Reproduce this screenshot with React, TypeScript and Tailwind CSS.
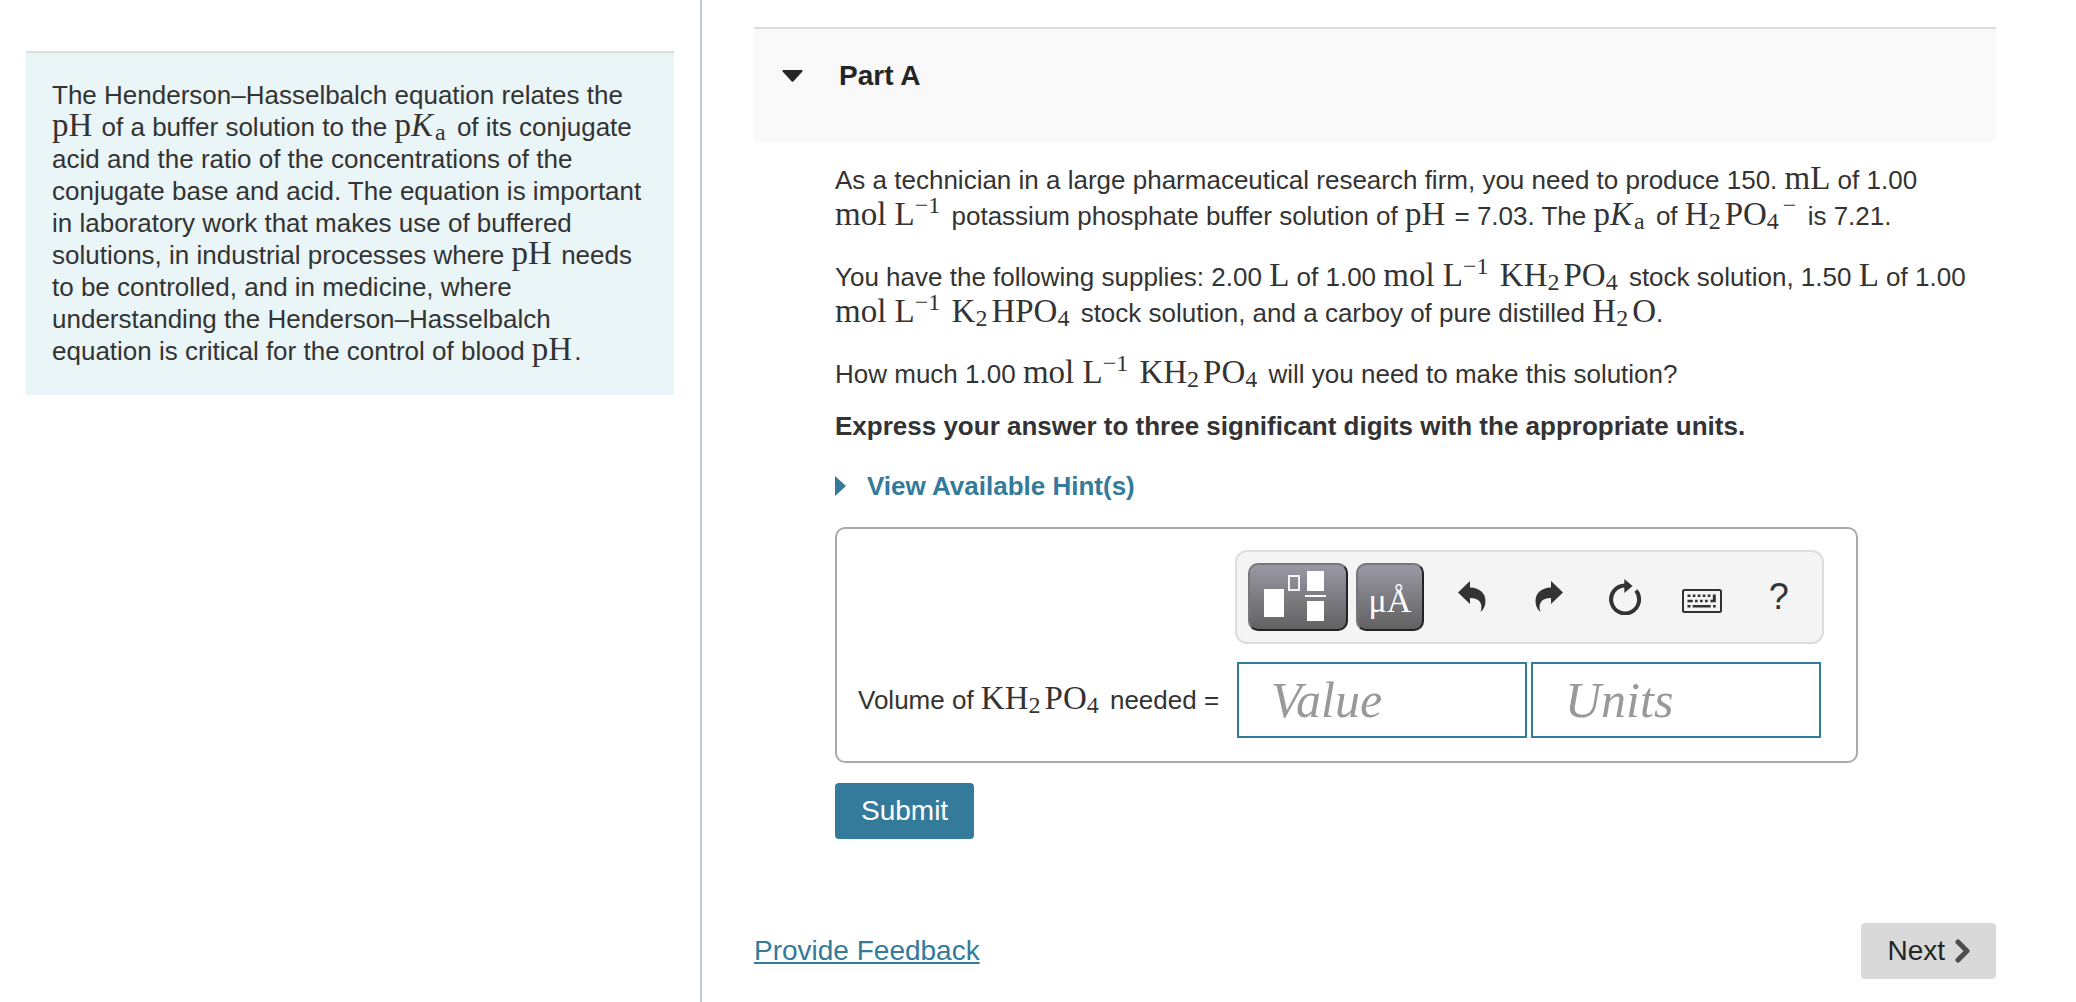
import React from 'react';

interface MathProps {
  children: React.ReactNode;
}

// Inline formula text, set in an upright serif
const Formula: React.FC<MathProps> = ({ children }) => (
  <span className="font-['Liberation_Serif',serif] text-[33px] leading-0 whitespace-nowrap">
    {children}
  </span>
);

const Sub: React.FC<MathProps> = ({ children }) => (
  <sub className="text-[24px] mr-1 -bottom-1">{children}</sub>
);

const Sup: React.FC<MathProps> = ({ children }) => (
  <sup className="text-[24px] mr-1 -top-3">{children}</sup>
);

const PH = () => (
  <Formula>
    <span className="mr-0.5">pH</span>
  </Formula>
);
const PKa = () => (
  <Formula>
    p<i className="mr-0.5">K</i>
    <Sub>a</Sub>
  </Formula>
);
const MolPerL = () => (
  <Formula>
    mol L<Sup>−1</Sup>
  </Formula>
);
const KH2PO4 = () => (
  <Formula>
    KH<Sub>2</Sub>PO<Sub>4</Sub>
  </Formula>
);

const UndoShape = () => (
  <path d="M0 11.5 L12 0 V6.5 C22 6.8 27.5 12.5 27.5 20 C27.5 25 25.5 28.5 22.5 31 C25 24 23 17 12 17 V23 Z" />
);

const TemplateIcon = () => (
  <svg width="96" height="64" viewBox="2 2 96 64" fill="#fff" aria-hidden="true">
    <rect x="16" y="26" width="20" height="28" />
    <rect x="41" y="13" width="10" height="14" fill="none" stroke="#fff" strokeWidth="1.8" />
    <rect x="59" y="8" width="17" height="20" />
    <rect x="57" y="32" width="21" height="2" />
    <rect x="59" y="38" width="17" height="20" />
  </svg>
);

const UndoIcon = () => (
  <svg width="28" height="32" viewBox="0 0 28 32" fill="#333" aria-hidden="true">
    <UndoShape />
  </svg>
);

const RedoIcon = () => (
  <svg width="28" height="32" viewBox="0 0 28 32" fill="#333" aria-hidden="true">
    <g transform="matrix(-1 0 0 1 28 0)">
      <UndoShape />
    </g>
  </svg>
);

const ResetIcon = () => (
  <svg width="32" height="36" viewBox="0 0 32 36" aria-hidden="true">
    <path d="M27 11.6 A14 14 0 1 1 16 6.4" fill="none" stroke="#333" strokeWidth="4" />
    <path d="M15.3 0 L23.5 7 L15.3 14 Z" fill="#333" />
  </svg>
);

const KeyboardIcon = () => (
  <svg width="40" height="24" viewBox="0 0 40 24" fill="#333" aria-hidden="true">
    <rect x="1" y="1" width="38" height="22" rx="1.5" fill="none" stroke="#333" strokeWidth="2" />
    <path d="M5.5 5.5h3v2.5h-3z M10.7 5.5h2.7v2.5h-2.7z M15.7 5.5h2.7v2.5h-2.7z M20.7 5.5h2.7v2.5h-2.7z M25.7 5.5h2.7v2.5h-2.7z" />
    <path d="M5.5 10.7h5.3v2.6h-5.3z M13 10.7h2.7v2.6h-2.7z M18 10.7h2.7v2.6h-2.7z M23 10.7h2.7v2.6h-2.7z M28.4 10.7h2.4V5.5h3v7.8h-5.4z" />
    <path d="M5.5 16h3v2.5h-3z M10.7 16h18v2.5h-18z M31 16h2.8v2.5h-2.8z" />
  </svg>
);

interface ToolButtonProps {
  label: string;
  children: React.ReactNode;
}

const DarkButton: React.FC<ToolButtonProps> = ({ label, children }) => (
  <button
    type="button"
    aria-label={label}
    className="flex h-[68px] min-w-[68px] items-center justify-center rounded-[10px] border-2 border-t-[#777] border-l-[#777] border-r-[#222] border-b-[#222] bg-linear-to-b from-[#9a98a4] to-[#626262] text-white"
  >
    {children}
  </button>
);

const PlainButton: React.FC<ToolButtonProps> = ({ label, children }) => (
  <button type="button" aria-label={label} className="flex h-[68px] flex-1 items-center justify-center text-[#333]">
    {children}
  </button>
);

const Toolbar = () => (
  <div className="flex h-[94px] w-[589px] items-center rounded-xl border-2 border-[#ddd] bg-[#f4f4f4] pl-[11px] pr-[5px]">
    <div className="mr-2.5 flex gap-2">
      <DarkButton label="Templates">
        <TemplateIcon />
      </DarkButton>
      <DarkButton label="Symbols">
        <span className="pt-2 font-['Liberation_Serif',serif] text-[34px] leading-none">μÅ</span>
      </DarkButton>
    </div>
    <PlainButton label="Undo">
      <UndoIcon />
    </PlainButton>
    <PlainButton label="Redo">
      <RedoIcon />
    </PlainButton>
    <PlainButton label="Reset">
      <ResetIcon />
    </PlainButton>
    <PlainButton label="Keyboard shortcuts">
      <div className="pt-2">
        <KeyboardIcon />
      </div>
    </PlainButton>
    <PlainButton label="Help">
      <span className="text-[36px] leading-none">?</span>
    </PlainButton>
  </div>
);

const inputStyle =
  "h-[76px] w-[290px] border-2 border-[#337a9b] bg-white px-8 font-['Liberation_Serif',serif] text-[50px] text-[#333] placeholder:italic placeholder:text-[#999] placeholder:opacity-100 outline-none";

const AnswerBox = () => (
  <div className="mt-[23px] grid w-[1023px] max-w-full grid-cols-[1fr_auto] items-center gap-y-[18px] rounded-[10px] border-2 border-[#aaa] pt-[21px] pr-8 pb-[23px] pl-[21px]">
    <div className="col-start-2">
      <Toolbar />
    </div>
    <label htmlFor="value" className="whitespace-nowrap">
      Volume of <KH2PO4 /> needed =
    </label>
    <div className="flex gap-1 pl-0.5">
      <input id="value" type="text" placeholder="Value" className={inputStyle} />
      <input type="text" aria-label="Units" placeholder="Units" className={inputStyle} />
    </div>
  </div>
);

const Intro = () => (
  <aside className="border-r-2 border-[#bccadb] px-[26px] pt-[51px]">
    <p className="border-t-2 border-[#ddd] bg-[#eaf5f7] px-[26px] pt-[26px] pb-[28px] text-[26px] leading-[32px]">
      The Henderson–Hasselbalch equation relates the <PH /> of a buffer solution to the <PKa /> of its
      conjugate acid and the ratio of the concentrations of the conjugate base and acid. The equation is
      important in laboratory work that makes use of buffered solutions, in industrial processes where{' '}
      <PH /> needs to be controlled, and in medicine, where understanding the Henderson–Hasselbalch equation
      is critical for the control of blood <PH />.
    </p>
  </aside>
);

const Question = () => (
  <div className="pt-5 pl-[81px] text-[26px] leading-[36px]">
    {/* Problem text */}
    <div className="flex flex-col gap-[25px]">
      <p>
        As a technician in a large pharmaceutical research firm, you need to produce 150.{' '}
        <Formula>mL</Formula> of 1.00 <MolPerL /> potassium phosphate buffer solution of <PH /> = 7.03. The{' '}
        <PKa /> of{' '}
        <Formula>
          H<Sub>2</Sub>PO<Sub>4</Sub>
          <Sup>−</Sup>
        </Formula>{' '}
        is 7.21.
      </p>
      <p>
        You have the following supplies: 2.00 <Formula>L</Formula> of 1.00 <MolPerL /> <KH2PO4 /> stock
        solution, 1.50 <Formula>L</Formula> of 1.00 <MolPerL />{' '}
        <Formula>
          K<Sub>2</Sub>HPO<Sub>4</Sub>
        </Formula>{' '}
        stock solution, and a carboy of pure distilled{' '}
        <Formula>
          H<Sub>2</Sub>O
        </Formula>
        .
      </p>
      <p>
        How much 1.00 <MolPerL /> <KH2PO4 /> will you need to make this solution?
      </p>
    </div>
    <p className="mt-4 font-bold">Express your answer to three significant digits with the appropriate units.</p>

    {/* Hints */}
    <button type="button" className="mt-6 flex items-center gap-[21px] font-bold text-[#337a9b]">
      <svg width="11" height="20" viewBox="0 0 11 20" fill="currentColor" aria-hidden="true">
        <path d="M0 0 L11 10 L0 20 Z" />
      </svg>
      View Available Hint(s)
    </button>

    <AnswerBox />

    <button type="submit" className="mt-5 h-14 rounded bg-[#337a9b] px-[26px] text-[28px] text-white">
      Submit
    </button>
  </div>
);

const App: React.FC = () => {
  return (
    <div className="grid min-h-screen grid-cols-[351fr_687fr] bg-white font-['Liberation_Sans',Arial,sans-serif] text-[#333]">
      <Intro />
      <main className="pt-[27px] pr-20 pl-[52px]">
        {/* Part header */}
        <div className="h-[115px] border-t-2 border-[#ddd] bg-[#f9f9f9] pt-[29px] pl-7">
          <button type="button" className="flex items-center gap-9 text-[28px] leading-[36px] font-bold text-[#252525]">
            <svg width="21" height="12" viewBox="0 0 21 12" fill="currentColor" aria-hidden="true">
              <path d="M1.5 0 H19.5 Q21 0 20.4 1.4 L11.5 11.3 Q10.5 12.4 9.5 11.3 L0.6 1.4 Q0 0 1.5 0 Z" />
            </svg>
            <h2>Part A</h2>
          </button>
        </div>

        <Question />

        {/* Footer */}
        <footer className="mt-[84px] flex items-center justify-between text-[28px]">
          <a href="#feedback" className="text-[#337a9b] underline decoration-2 underline-offset-2">
            Provide Feedback
          </a>
          <button type="button" className="flex h-14 items-center gap-2.5 rounded bg-[#d9d9d9] px-[26px] text-[#252525]">
            Next
            <svg width="15" height="24" viewBox="0 0 15 24" fill="none" stroke="#4d4d4d" strokeWidth="5" strokeLinecap="round" strokeLinejoin="round" aria-hidden="true">
              <path d="M3 3 L12 12 L3 21" />
            </svg>
          </button>
        </footer>
      </main>
    </div>
  );
};

export default App;
